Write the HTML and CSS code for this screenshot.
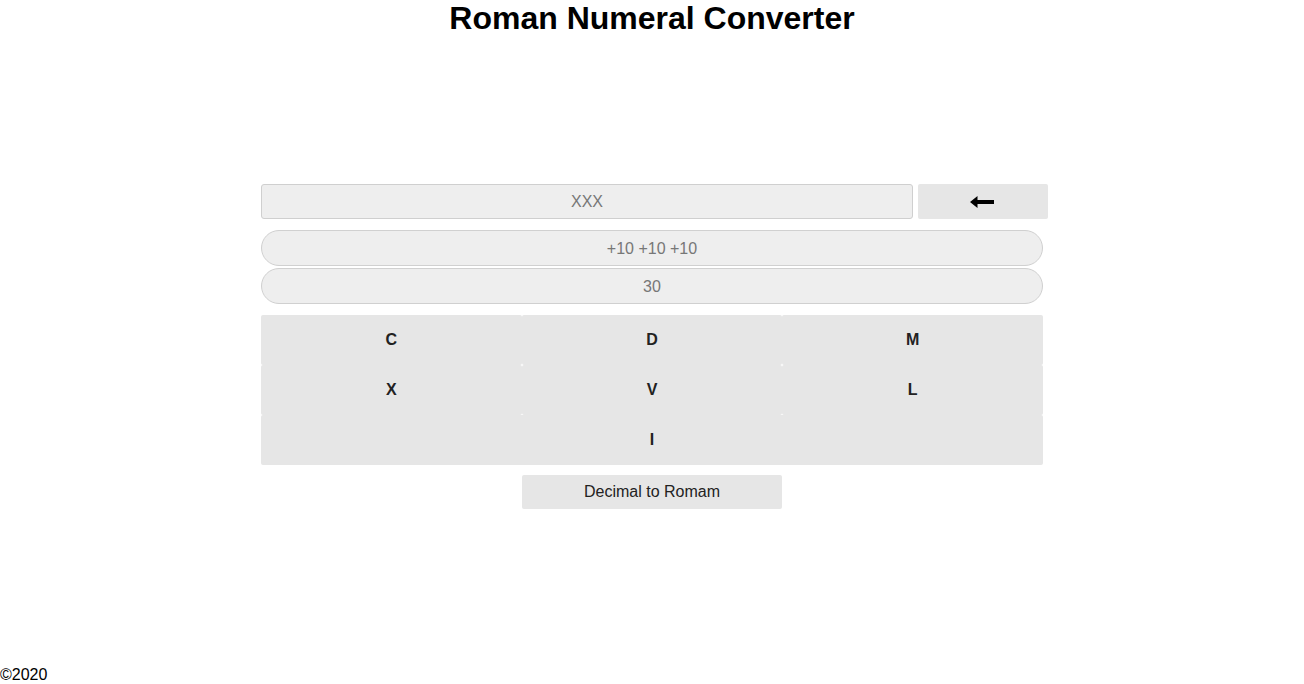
FILE: index.html
```html
<!DOCTYPE html>
<html>
<head>
<meta charset="utf-8">
<title>Roman Numeral Converter</title>
<link rel="stylesheet" href="styles.css">
</head>
<body>
<h1 class="title">Roman Numeral Converter</h1>
<main class="converter">
  <div class="entry-row">
    <div class="field">XXX</div>
    <button class="back-btn" type="button" aria-label="Backspace">
      <svg width="24" height="12" viewBox="0 0 24 12"><path d="M0 6 L7.5 0 L7.5 4 L24 4 L24 8 L7.5 8 L7.5 12 Z" fill="#000"/></svg>
    </button>
  </div>
  <div class="pill pill-first">+10 +10 +10</div>
  <div class="pill pill-second">30</div>
  <div class="keypad">
    <button class="key" type="button">C</button>
    <button class="key" type="button">D</button>
    <button class="key" type="button">M</button>
    <button class="key" type="button">X</button>
    <button class="key" type="button">V</button>
    <button class="key" type="button">L</button>
    <button class="key key-wide" type="button">I</button>
  </div>
  <div class="mode-row">
    <button class="mode-btn" type="button">Decimal to Romam</button>
  </div>
</main>
<footer class="footer">©2020</footer>
</body>
</html>
```
FILE: styles.css
```css
html, body {
  margin: 0;
  padding: 0;
}
body {
  font-family: "Liberation Sans", Arial, sans-serif;
  font-size: 16px;
  color: #000;
  background: #fff;
  display: flex;
  flex-direction: column;
  min-height: 100vh;
}
.title {
  margin: 0;
  font-size: 32px;
  line-height: 37px;
  font-weight: bold;
  text-align: center;
}
.converter {
  width: 782px;
  margin: 147px auto 0;
}
.entry-row {
  display: flex;
  gap: 5px;
  height: 35px;
}
.field {
  flex: 0 0 652px;
  box-sizing: border-box;
  height: 35px;
  background: #eee;
  border: 1px solid #cfcfcf;
  border-radius: 3px;
  color: #777;
  display: flex;
  align-items: center;
  justify-content: center;
  padding-top: 1px;
}
.back-btn {
  flex: 0 0 130px;
  height: 35px;
  border: none;
  border-radius: 2px;
  background: #e6e6e6;
  display: flex;
  align-items: center;
  justify-content: center;
  padding: 0 2px 0 0;
}
.pill {
  box-sizing: border-box;
  height: 36px;
  background: #eee;
  border: 1px solid #d0d0d0;
  border-radius: 18px;
  color: #777;
  display: flex;
  align-items: center;
  justify-content: center;
  padding-top: 2px;
}
.pill-first {
  margin-top: 11px;
}
.pill-second {
  margin-top: 2px;
}
.keypad {
  margin-top: 11px;
  display: grid;
  grid-template-columns: repeat(3, 1fr);
  grid-auto-rows: 50px;
}
.key {
  border: none;
  margin: 0;
  background: #e6e6e6;
  border-radius: 2px;
  font-family: "Liberation Sans", Arial, sans-serif;
  font-size: 16px;
  font-weight: bold;
  color: #222;
  padding: 0;
}
.key-wide {
  grid-column: 1 / 4;
}
.mode-row {
  margin-top: 10px;
  display: flex;
  justify-content: center;
}
.mode-btn {
  width: 260px;
  height: 34px;
  border: none;
  border-radius: 2px;
  background: #e6e6e6;
  font-family: "Liberation Sans", Arial, sans-serif;
  font-size: 16px;
  color: #222;
  padding: 0;
}
.footer {
  margin-top: auto;
  line-height: 18px;
  font-size: 16px;
}
```
